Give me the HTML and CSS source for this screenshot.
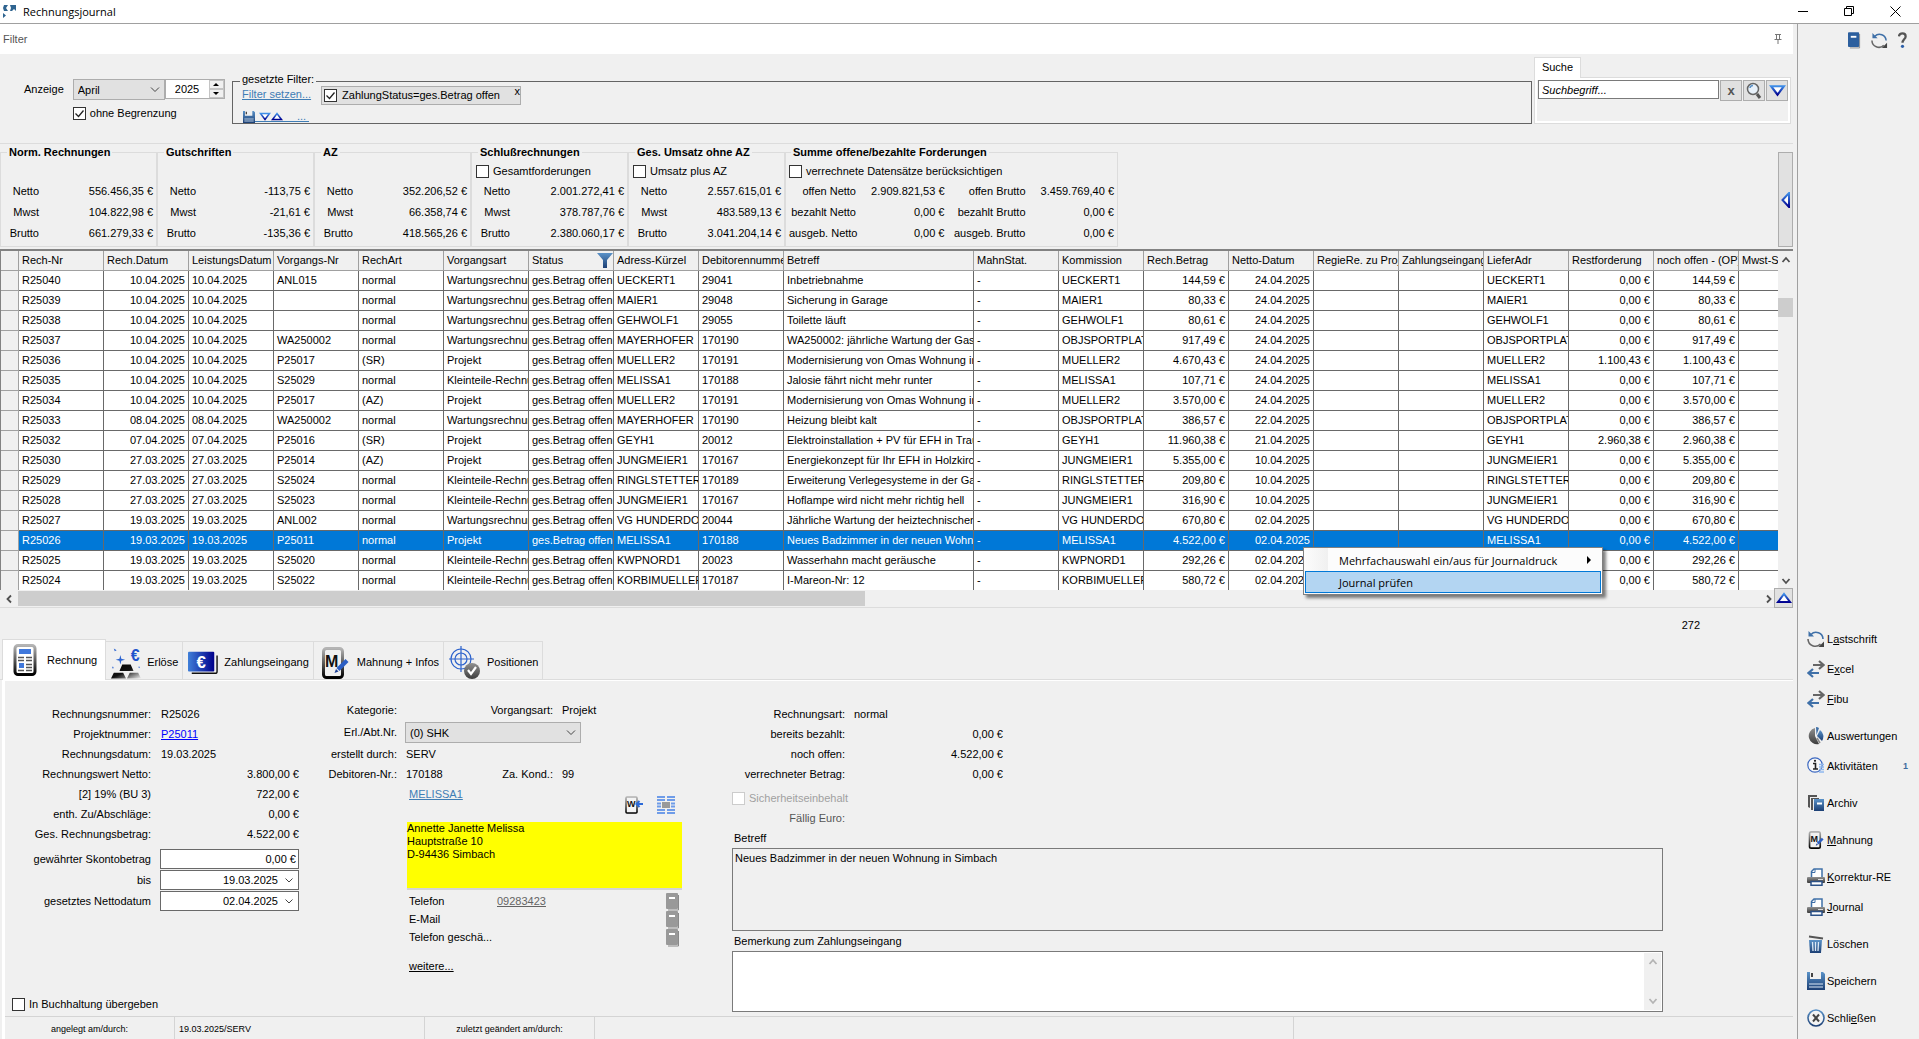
FILE: index.html
```html
<!DOCTYPE html>
<html lang="de">
<head>
    <meta charset="UTF-8">
    <meta name="viewport" content="width=device-width, initial-scale=1.0">
    <title>Rechnungsjournal</title>
    <link rel="stylesheet" href="styles.css">
</head>
<body>

    <!-- Symbole -->
    <svg class="symbols" width="0" height="0" aria-hidden="true">
        <defs>
            <linearGradient id="blau" x1="0" y1="0" x2="0" y2="1"><stop offset="0" stop-color="#5a92c8"/><stop offset="1" stop-color="#1c3f74"/></linearGradient>
            <linearGradient id="grau" x1="0" y1="0" x2="0" y2="1"><stop offset="0" stop-color="#909090"/><stop offset="1" stop-color="#3c3c3c"/></linearGradient>
            <linearGradient id="silber" x1="0" y1="0" x2="0" y2="1"><stop offset="0" stop-color="#b4b4b4"/><stop offset="1" stop-color="#000"/></linearGradient>
            <linearGradient id="barren" x1="0" y1="0" x2="1" y2="1"><stop offset="0" stop-color="#000"/><stop offset=".5" stop-color="#111"/><stop offset="1" stop-color="#eee"/></linearGradient>
            <linearGradient id="royal" x1="0" y1="0" x2="1" y2="0"><stop offset="0" stop-color="#3f7fd8"/><stop offset="1" stop-color="#00008c"/></linearGradient>
            <linearGradient id="royalv" x1="0" y1="0" x2="0" y2="1"><stop offset="0" stop-color="#3f8fe8"/><stop offset="1" stop-color="#000090"/></linearGradient>
        </defs>
        <symbol id="i-sync" viewBox="0 0 18 18">
            <path d="M4 4.500A7 7 0 0 1 16 9" fill="none" stroke="#3f70a8" stroke-width="1.600"/>
            <path d="M1.500 1v5.500H7z" fill="#3f70a8"/>
            <path d="M1 9a7.300 7.300 0 0 0 12.500 5" fill="none" stroke="#666" stroke-width="1.600"/>
            <path d="M17 11.500v5.500h-5.500z" fill="#444"/>
        </symbol>
        <symbol id="i-arrows" viewBox="0 0 18 18">
            <path d="M6 5h10M12 1l4.500 4-4.500 4" fill="none" stroke="#666" stroke-width="2.200"/>
            <path d="M12 13H2M6 9l-4.500 4 4.500 4" fill="none" stroke="#3f70a8" stroke-width="2.200"/>
        </symbol>
        <symbol id="i-printer" viewBox="0 0 18 18">
            <path d="M4.500 9V3.500L7 1h8v8" fill="#fff" stroke="#3f70a8" stroke-width="1.500"/>
            <path d="M8 1v3.500H4.500" fill="none" stroke="#3f70a8"/>
            <rect x="0" y="9" width="18" height="6" rx="1" fill="url(#grau)"/>
            <path d="M11 11.500h5" stroke="#ddd"/>
            <path d="M4 13.500v3.700h11v-3.700z" fill="#fff" stroke="#2c5288" stroke-width="1.500"/>
        </symbol>
        <symbol id="i-book" viewBox="0 0 14 18">
            <path d="M12.500 2v15H2" fill="none" stroke="#8a8a8a"/>
            <rect x="0" y="0" width="12" height="16" rx="1" fill="currentColor"/>
            <rect x="3" y="4" width="6" height="2" fill="#fff"/>
        </symbol>
        <symbol id="i-disk" viewBox="0 0 18 18">
            <path d="M0 0h3v7h11V0h2l2 2v16H0z" fill="url(#blau)"/>
            <path d="M4 1h2v4H4z" fill="#444"/>
            <path d="M2 12h14M2 15h14" stroke="#dbe8f5" stroke-width="1.200"/>
        </symbol>
        <symbol id="i-down" viewBox="0 0 16 12"><path d="M2 2h12L8 10z" fill="#fff" stroke="url(#royalv)" stroke-width="2"/></symbol>
        <symbol id="i-up" viewBox="0 0 16 12"><path d="M2 10h12L8 2z" fill="#fff" stroke="url(#royalv)" stroke-width="2"/></symbol>
        <symbol id="i-mahnung" viewBox="0 0 27 32">
            <rect x="2" y="1.500" width="19" height="29" rx="3" fill="#f0f0f0" stroke="url(#silber)" stroke-width="3"/>
            <text x="3.500" y="20" class="icon-letter" font-size="16" fill="#111">M</text>
            <path d="M24 12l3 3-9 9-3-3z" fill="#2c5fc4"/>
            <path d="M14.500 22l2.500 2.500-4 1.500z" fill="#1c3f94"/>
        </symbol>
        <symbol id="chev-up" viewBox="0 0 10 10"><path d="M1.500 7L5 3l3.500 4" fill="none" stroke="currentColor" stroke-width="1.800"/></symbol>
        <symbol id="chev-down" viewBox="0 0 10 10"><path d="M1.500 3L5 7l3.500-4" fill="none" stroke="currentColor" stroke-width="1.800"/></symbol>
        <symbol id="chev-left" viewBox="0 0 10 10"><path d="M7 1.500L3.500 5 7 8.500" fill="none" stroke="currentColor" stroke-width="1.800"/></symbol>
        <symbol id="chev-right" viewBox="0 0 10 10"><path d="M3 1.500L6.500 5 3 8.500" fill="none" stroke="currentColor" stroke-width="1.800"/></symbol>
    </svg>

    <div class="window">
        <!-- TITELLEISTE -->
        <header class="titlebar">
            <svg class="app-icon" width="14" height="14" viewBox="0 0 14 14" aria-hidden="true">
                <path d="M1 0h4L3 3l2 3H1L0 3zM7 0h6v6l-2-2-2 2H7l1-3zM0 8l3 2.500L0 13z" fill="#2f6490"/>
            </svg>
            <h1>Rechnungsjournal</h1>
            <div class="window-buttons">
                <button type="button" aria-label="Minimieren"><svg width="11" height="11" viewBox="0 0 11 11"><path d="M0 5.500h10" stroke="#000"/></svg></button>
                <button type="button" aria-label="Wiederherstellen"><svg width="11" height="11" viewBox="0 0 11 11"><path d="M.5 2.500h7v7h-7zM2.500 2.500v-2h7v7h-2" fill="none" stroke="#000"/></svg></button>
                <button type="button" aria-label="Fenster schließen"><svg width="11" height="11" viewBox="0 0 11 11"><path d="M.5.5l10 10M10.500.5l-10 10" stroke="#000"/></svg></button>
            </div>
        </header>

        <div class="workspace">
            <main class="main">
                <div class="filter-title">
                    <span>Filter</span>
                    <svg width="8" height="11" viewBox="0 0 8 11" aria-hidden="true"><path d="M1 .5h6M2.500 1v4.500M5.500 1v4.500M.5 5.500h7M4 6v4" fill="none" stroke="#777"/></svg>
                </div>

                <!-- FILTER -->
                <section class="filter">
                    <div class="display">
                        <label for="monat">Anzeige</label>
                        <div class="display-controls">
                            <div class="display-row">
                                <select id="monat"><option>April</option></select>
                                <div class="spinner">
                                    <input type="text" value="2025" aria-label="Jahr">
                                    <div class="spinner-buttons">
                                        <button type="button" aria-label="Jahr vor"><svg width="6" height="3" viewBox="0 0 6 3"><path d="M0 3h6L3 0z"/></svg></button>
                                        <button type="button" aria-label="Jahr zurück"><svg width="6" height="3" viewBox="0 0 6 3"><path d="M0 0h6L3 3z"/></svg></button>
                                    </div>
                                </div>
                            </div>
                            <label class="check"><input type="checkbox" checked>ohne Begrenzung</label>
                        </div>
                    </div>

                    <fieldset class="active-filters">
                        <legend>gesetzte Filter:</legend>
                        <div class="filter-line">
                            <a class="link" href="#">Filter setzen...</a>
                            <div class="chip">
                                <label class="check"><input type="checkbox" checked>ZahlungStatus=ges.Betrag offen</label>
                                <button type="button" aria-label="Filter entfernen">x</button>
                            </div>
                        </div>
                        <div class="filter-tools">
                            <svg width="12" height="12" aria-hidden="true"><use href="#i-disk"/></svg>
                            <a class="link" href="#">
                                <svg width="12" height="9" aria-hidden="true"><use href="#i-down"/></svg><svg width="12" height="9" aria-hidden="true"><use href="#i-up"/></svg>
                                <span>...</span>
                            </a>
                        </div>
                    </fieldset>

                    <div class="search">
                        <div class="search-tab">Suche</div>
                        <div class="search-panel">
                            <input type="text" placeholder="Suchbegriff..." aria-label="Suche">
                            <button type="button" class="search-clear" aria-label="Suche leeren">x</button>
                            <button type="button" aria-label="Suchen"><svg width="16" height="18" viewBox="0 0 16 18"><circle cx="7" cy="7" r="5.500" fill="#e8f1fa" stroke="#666" stroke-width="1.500"/><path d="M4 6a3 3 0 0 1 3-2.500" fill="none" stroke="#5a92c8" stroke-width="1.500"/><path d="M11 12l3 4" stroke="#555" stroke-width="3"/></svg></button>
                            <button type="button" aria-label="Mehr"><svg width="17" height="13"><use href="#i-down"/></svg></button>
                        </div>
                    </div>
                </section>

                <!-- SUMMEN -->
                <section class="totals">
                    <fieldset class="total">
                        <legend>Norm. Rechnungen</legend>
                        <dl>
                            <dt>Netto</dt><dd>556.456,35 €</dd>
                            <dt>Mwst</dt><dd>104.822,98 €</dd>
                            <dt>Brutto</dt><dd>661.279,33 €</dd>
                        </dl>
                    </fieldset>
                    <fieldset class="total">
                        <legend>Gutschriften</legend>
                        <dl>
                            <dt>Netto</dt><dd>-113,75 €</dd>
                            <dt>Mwst</dt><dd>-21,61 €</dd>
                            <dt>Brutto</dt><dd>-135,36 €</dd>
                        </dl>
                    </fieldset>
                    <fieldset class="total">
                        <legend>AZ</legend>
                        <dl>
                            <dt>Netto</dt><dd>352.206,52 €</dd>
                            <dt>Mwst</dt><dd>66.358,74 €</dd>
                            <dt>Brutto</dt><dd>418.565,26 €</dd>
                        </dl>
                    </fieldset>
                    <fieldset class="total">
                        <legend>Schlußrechnungen</legend>
                        <label class="check"><input type="checkbox">Gesamtforderungen</label>
                        <dl>
                            <dt>Netto</dt><dd>2.001.272,41 €</dd>
                            <dt>Mwst</dt><dd>378.787,76 €</dd>
                            <dt>Brutto</dt><dd>2.380.060,17 €</dd>
                        </dl>
                    </fieldset>
                    <fieldset class="total">
                        <legend>Ges. Umsatz ohne AZ</legend>
                        <label class="check"><input type="checkbox">Umsatz plus AZ</label>
                        <dl>
                            <dt>Netto</dt><dd>2.557.615,01 €</dd>
                            <dt>Mwst</dt><dd>483.589,13 €</dd>
                            <dt>Brutto</dt><dd>3.041.204,14 €</dd>
                        </dl>
                    </fieldset>
                    <fieldset class="total total-wide">
                        <legend>Summe offene/bezahlte Forderungen</legend>
                        <label class="check"><input type="checkbox">verrechnete Datensätze berücksichtigen</label>
                        <dl>
                            <dt>offen Netto</dt><dd>2.909.821,53 €</dd><dt>offen Brutto</dt><dd>3.459.769,40 €</dd>
                            <dt>bezahlt Netto</dt><dd>0,00 €</dd><dt>bezahlt Brutto</dt><dd>0,00 €</dd>
                            <dt>ausgeb. Netto</dt><dd>0,00 €</dd><dt>ausgeb. Brutto</dt><dd>0,00 €</dd>
                        </dl>
                    </fieldset>
                    <button type="button" class="totals-toggle" aria-label="Summen einklappen"><svg width="9" height="16" viewBox="0 0 9 16"><path d="M8 1v14L1.500 8z" fill="#fff" stroke="url(#royalv)" stroke-width="2"/></svg></button>
                </section>

                <!-- JOURNAL -->
                <section class="journal">
                    <div class="grid">
                        <div class="grid-view">
                            <table>
                                <colgroup>
                                    <col class="col-head"><col span="9" class="col"><col class="col-betreff"><col span="10" class="col">
                                </colgroup>
                                <thead>
                                    <tr><th></th><th>Rech-Nr</th><th>Rech.Datum</th><th>LeistungsDatum</th><th>Vorgangs-Nr</th><th>RechArt</th><th>Vorgangsart</th><th><span class="th-filter">Status<svg width="16" height="15" viewBox="0 0 16 15" aria-hidden="true"><path d="M0 0h16L10 7v8H6V7z" fill="url(#blau)"/></svg></span></th><th>Adress-Kürzel</th><th>Debitorennummer</th><th>Betreff</th><th>MahnStat.</th><th>Kommission</th><th>Rech.Betrag</th><th>Netto-Datum</th><th>RegieRe. zu Projekt</th><th>Zahlungseingang</th><th>LieferAdr</th><th>Restforderung</th><th>noch offen - (OP)</th><th>Mwst-Satz</th></tr>
                                </thead>
                                <tbody>
                                    <tr><td></td><td>R25040</td><td class="num">10.04.2025</td><td>10.04.2025</td><td>ANL015</td><td>normal</td><td>Wartungsrechnung</td><td>ges.Betrag offen</td><td>UECKERT1</td><td>29041</td><td>Inbetriebnahme</td><td>-</td><td>UECKERT1</td><td class="num">144,59 €</td><td class="num">24.04.2025</td><td></td><td></td><td>UECKERT1</td><td class="num">0,00 €</td><td class="num">144,59 €</td><td></td></tr>
                                    <tr><td></td><td>R25039</td><td class="num">10.04.2025</td><td>10.04.2025</td><td></td><td>normal</td><td>Wartungsrechnung</td><td>ges.Betrag offen</td><td>MAIER1</td><td>29048</td><td>Sicherung in Garage</td><td>-</td><td>MAIER1</td><td class="num">80,33 €</td><td class="num">24.04.2025</td><td></td><td></td><td>MAIER1</td><td class="num">0,00 €</td><td class="num">80,33 €</td><td></td></tr>
                                    <tr><td></td><td>R25038</td><td class="num">10.04.2025</td><td>10.04.2025</td><td></td><td>normal</td><td>Wartungsrechnung</td><td>ges.Betrag offen</td><td>GEHWOLF1</td><td>29055</td><td>Toilette läuft</td><td>-</td><td>GEHWOLF1</td><td class="num">80,61 €</td><td class="num">24.04.2025</td><td></td><td></td><td>GEHWOLF1</td><td class="num">0,00 €</td><td class="num">80,61 €</td><td></td></tr>
                                    <tr><td></td><td>R25037</td><td class="num">10.04.2025</td><td>10.04.2025</td><td>WA250002</td><td>normal</td><td>Wartungsrechnung</td><td>ges.Betrag offen</td><td>MAYERHOFER</td><td>170190</td><td>WA250002: jährliche Wartung der Gasheizung</td><td>-</td><td>OBJSPORTPLATZ</td><td class="num">917,49 €</td><td class="num">24.04.2025</td><td></td><td></td><td>OBJSPORTPLATZ</td><td class="num">0,00 €</td><td class="num">917,49 €</td><td></td></tr>
                                    <tr><td></td><td>R25036</td><td class="num">10.04.2025</td><td>10.04.2025</td><td>P25017</td><td>(SR)</td><td>Projekt</td><td>ges.Betrag offen</td><td>MUELLER2</td><td>170191</td><td>Modernisierung von Omas Wohnung in</td><td>-</td><td>MUELLER2</td><td class="num">4.670,43 €</td><td class="num">24.04.2025</td><td></td><td></td><td>MUELLER2</td><td class="num">1.100,43 €</td><td class="num">1.100,43 €</td><td></td></tr>
                                    <tr><td></td><td>R25035</td><td class="num">10.04.2025</td><td>10.04.2025</td><td>S25029</td><td>normal</td><td>Kleinteile-Rechnung</td><td>ges.Betrag offen</td><td>MELISSA1</td><td>170188</td><td>Jalosie fährt nicht mehr runter</td><td>-</td><td>MELISSA1</td><td class="num">107,71 €</td><td class="num">24.04.2025</td><td></td><td></td><td>MELISSA1</td><td class="num">0,00 €</td><td class="num">107,71 €</td><td></td></tr>
                                    <tr><td></td><td>R25034</td><td class="num">10.04.2025</td><td>10.04.2025</td><td>P25017</td><td>(AZ)</td><td>Projekt</td><td>ges.Betrag offen</td><td>MUELLER2</td><td>170191</td><td>Modernisierung von Omas Wohnung in</td><td>-</td><td>MUELLER2</td><td class="num">3.570,00 €</td><td class="num">24.04.2025</td><td></td><td></td><td>MUELLER2</td><td class="num">0,00 €</td><td class="num">3.570,00 €</td><td></td></tr>
                                    <tr><td></td><td>R25033</td><td class="num">08.04.2025</td><td>08.04.2025</td><td>WA250002</td><td>normal</td><td>Wartungsrechnung</td><td>ges.Betrag offen</td><td>MAYERHOFER</td><td>170190</td><td>Heizung bleibt kalt</td><td>-</td><td>OBJSPORTPLATZ</td><td class="num">386,57 €</td><td class="num">22.04.2025</td><td></td><td></td><td>OBJSPORTPLATZ</td><td class="num">0,00 €</td><td class="num">386,57 €</td><td></td></tr>
                                    <tr><td></td><td>R25032</td><td class="num">07.04.2025</td><td>07.04.2025</td><td>P25016</td><td>(SR)</td><td>Projekt</td><td>ges.Betrag offen</td><td>GEYH1</td><td>20012</td><td>Elektroinstallation + PV für EFH in Traunstein</td><td>-</td><td>GEYH1</td><td class="num">11.960,38 €</td><td class="num">21.04.2025</td><td></td><td></td><td>GEYH1</td><td class="num">2.960,38 €</td><td class="num">2.960,38 €</td><td></td></tr>
                                    <tr><td></td><td>R25030</td><td class="num">27.03.2025</td><td>27.03.2025</td><td>P25014</td><td>(AZ)</td><td>Projekt</td><td>ges.Betrag offen</td><td>JUNGMEIER1</td><td>170167</td><td>Energiekonzept für Ihr EFH in Holzkirchen</td><td>-</td><td>JUNGMEIER1</td><td class="num">5.355,00 €</td><td class="num">10.04.2025</td><td></td><td></td><td>JUNGMEIER1</td><td class="num">0,00 €</td><td class="num">5.355,00 €</td><td></td></tr>
                                    <tr><td></td><td>R25029</td><td class="num">27.03.2025</td><td>27.03.2025</td><td>S25024</td><td>normal</td><td>Kleinteile-Rechnung</td><td>ges.Betrag offen</td><td>RINGLSTETTER</td><td>170189</td><td>Erweiterung Verlegesysteme in der Garage</td><td>-</td><td>RINGLSTETTER</td><td class="num">209,80 €</td><td class="num">10.04.2025</td><td></td><td></td><td>RINGLSTETTER</td><td class="num">0,00 €</td><td class="num">209,80 €</td><td></td></tr>
                                    <tr><td></td><td>R25028</td><td class="num">27.03.2025</td><td>27.03.2025</td><td>S25023</td><td>normal</td><td>Kleinteile-Rechnung</td><td>ges.Betrag offen</td><td>JUNGMEIER1</td><td>170167</td><td>Hoflampe wird nicht mehr richtig hell</td><td>-</td><td>JUNGMEIER1</td><td class="num">316,90 €</td><td class="num">10.04.2025</td><td></td><td></td><td>JUNGMEIER1</td><td class="num">0,00 €</td><td class="num">316,90 €</td><td></td></tr>
                                    <tr><td></td><td>R25027</td><td class="num">19.03.2025</td><td>19.03.2025</td><td>ANL002</td><td>normal</td><td>Wartungsrechnung</td><td>ges.Betrag offen</td><td>VG HUNDERDORF</td><td>20044</td><td>Jährliche Wartung der heiztechnischen</td><td>-</td><td>VG HUNDERDORF</td><td class="num">670,80 €</td><td class="num">02.04.2025</td><td></td><td></td><td>VG HUNDERDORF</td><td class="num">0,00 €</td><td class="num">670,80 €</td><td></td></tr>
                                    <tr class="selected"><td></td><td>R25026</td><td class="num">19.03.2025</td><td>19.03.2025</td><td>P25011</td><td>normal</td><td>Projekt</td><td>ges.Betrag offen</td><td>MELISSA1</td><td>170188</td><td>Neues Badzimmer in der neuen Wohnung</td><td>-</td><td>MELISSA1</td><td class="num">4.522,00 €</td><td class="num">02.04.2025</td><td></td><td></td><td>MELISSA1</td><td class="num">0,00 €</td><td class="num">4.522,00 €</td><td></td></tr>
                                    <tr><td></td><td>R25025</td><td class="num">19.03.2025</td><td>19.03.2025</td><td>S25020</td><td>normal</td><td>Kleinteile-Rechnung</td><td>ges.Betrag offen</td><td>KWPNORD1</td><td>20023</td><td>Wasserhahn macht geräusche</td><td>-</td><td>KWPNORD1</td><td class="num">292,26 €</td><td class="num">02.04.2025</td><td></td><td></td><td>KWPNORD1</td><td class="num">0,00 €</td><td class="num">292,26 €</td><td></td></tr>
                                    <tr><td></td><td>R25024</td><td class="num">19.03.2025</td><td>19.03.2025</td><td>S25022</td><td>normal</td><td>Kleinteile-Rechnung</td><td>ges.Betrag offen</td><td>KORBIMUELLER</td><td>170187</td><td>I-Mareon-Nr: 12</td><td>-</td><td>KORBIMUELLER</td><td class="num">580,72 €</td><td class="num">02.04.2025</td><td></td><td></td><td>KORBIMUELLER</td><td class="num">0,00 €</td><td class="num">580,72 €</td><td></td></tr>
                                </tbody>
                            </table>
                        </div>
                        <div class="scroll-v">
                            <svg width="10" height="10" aria-hidden="true"><use href="#chev-up"/></svg>
                            <div class="scroll-track"><div class="thumb"></div></div>
                            <svg width="10" height="10" aria-hidden="true"><use href="#chev-down"/></svg>
                        </div>
                    </div>
                    <div class="scroll-h">
                        <svg width="10" height="10" aria-hidden="true"><use href="#chev-left"/></svg>
                        <div class="scroll-track"><div class="thumb"></div></div>
                        <svg width="10" height="10" aria-hidden="true"><use href="#chev-right"/></svg>
                        <button type="button" aria-label="Liste verkleinern"><svg width="16" height="12"><use href="#i-up"/></svg></button>
                    </div>

                    <div class="context-menu" role="menu">
                        <button type="button" role="menuitem">Mehrfachauswahl ein/aus für Journaldruck<svg width="4" height="8" viewBox="0 0 4 8" aria-hidden="true"><path d="M0 0l4 4-4 4z"/></svg></button>
                        <button type="button" role="menuitem" class="active">Journal prüfen</button>
                    </div>
                </section>

                <div class="count">272</div>

                <!-- REITER -->
                <nav class="tabs">
                    <button type="button" class="tab active">
                        <svg width="24" height="32" viewBox="0 0 24 32" aria-hidden="true">
                            <rect x="2" y="1.500" width="20" height="29" rx="3" fill="#fff" stroke="url(#silber)" stroke-width="3"/>
                            <rect x="6" y="5" width="12" height="5" fill="#3f78dc"/>
                            <path d="M5 13.500h6M13 13.500h6M5 16.500h6M13 16.500h6M13 20.500h6M13 23.500h6M5 26.500h6M13 26.500h6" stroke="#555" stroke-width="1.300"/>
                            <rect x="6" y="19" width="5" height="5" fill="#3f78dc"/>
                        </svg>
                        Rechnung
                    </button>
                    <button type="button" class="tab">
                        <svg width="30" height="32" viewBox="0 0 32 33" aria-hidden="true">
                            <path d="M0 33l3-6h10l3 6zM17 33l3-6h9l3 6zM9 25l3-7h9l3 7z" fill="url(#barren)"/>
                            <path d="M10 8l1 4 4 1-4 1-1 4-1-4-4-1 4-1zM3 1l3 2-2 1zM1 22l1-2 1 2zM29 21l1-1 1 2z" fill="#2c64d0"/>
                            <text x="21" y="14" class="icon-letter" font-size="17" fill="#1f55cc">€</text>
                        </svg>
                        Erlöse
                    </button>
                    <button type="button" class="tab">
                        <svg width="30" height="26" viewBox="0 0 32 26" aria-hidden="true">
                            <path d="M4 24h25a2 2 0 0 0 2-2V5" fill="none" stroke="#111" stroke-width="1.500"/>
                            <rect x="0" y="1" width="28" height="21" rx="1" fill="url(#royal)"/>
                            <text x="9" y="18" class="icon-letter" font-size="18" fill="#fff">€</text>
                        </svg>
                        Zahlungseingang
                    </button>
                    <button type="button" class="tab">
                        <svg width="32" height="32" aria-hidden="true"><use href="#i-mahnung"/></svg>
                        Mahnung + Infos
                    </button>
                    <button type="button" class="tab">
                        <svg width="32" height="33" viewBox="0 0 32 33" aria-hidden="true">
                            <g fill="none" stroke="#2c62cc" stroke-width="1.200"><circle cx="12" cy="13" r="10"/><circle cx="12" cy="13" r="6"/><path d="M12 0v26M0 13h25"/></g>
                            <circle cx="23" cy="25" r="8" fill="url(#grau)"/>
                            <path d="M19 24l3 4 5-7" fill="none" stroke="#fff" stroke-width="2.200"/>
                        </svg>
                        Positionen
                    </button>
                </nav>

                <!-- DETAILS -->
                <section class="detail">
                    <div class="detail-columns">
                        <div class="invoice">
                            <dl class="fields">
                                <dt>Rechnungsnummer:</dt><dd>R25026</dd>
                                <dt>Projektnummer:</dt><dd><a class="project" href="#">P25011</a></dd>
                                <dt>Rechnungsdatum:</dt><dd>19.03.2025</dd>
                                <dt>Rechnungswert Netto:</dt><dd class="num">3.800,00 €</dd>
                                <dt>[2] 19% (BU 3)</dt><dd class="num">722,00 €</dd>
                                <dt>enth. Zu/Abschläge:</dt><dd class="num">0,00 €</dd>
                                <dt>Ges. Rechnungsbetrag:</dt><dd class="num">4.522,00 €</dd>
                            </dl>
                            <div class="inputs">
                                <label for="skonto">gewährter Skontobetrag</label><input type="text" id="skonto" value="0,00 €">
                                <label for="bis">bis</label><input type="text" id="bis" class="date" value="19.03.2025">
                                <label for="netto">gesetztes Nettodatum</label><input type="text" id="netto" class="date" value="02.04.2025">
                            </div>
                            <label class="check booked"><input type="checkbox">In Buchhaltung übergeben</label>
                        </div>

                        <div class="customer">
                            <div class="customer-fields">
                                <span class="name">Kategorie:</span><span></span><span class="name">Vorgangsart:</span><span>Projekt</span>
                                <label class="name" for="abteilung">Erl./Abt.Nr.</label><select id="abteilung"><option>(0) SHK</option></select>
                                <span class="name">erstellt durch:</span><span>SERV</span><span></span><span></span>
                                <span class="name">Debitoren-Nr.:</span><span>170188</span><span class="name">Za. Kond.:</span><span>99</span>
                            </div>
                            <div class="address">
                                <div class="address-head">
                                    <a class="link" href="#">MELISSA1</a>
                                    <button type="button" aria-label="In Word öffnen"><svg width="18" height="18" viewBox="0 0 18 18"><rect x="1" y="1" width="11" height="16" rx="1" fill="#f4f4f4" stroke="url(#silber)" stroke-width="1.600"/><text x="2" y="11" class="icon-letter" font-size="9" fill="#111">W</text><path d="M18 8h-6M14.500 5l-3 3 3 3" fill="none" stroke="#2c6ad8" stroke-width="2"/></svg></button>
                                    <button type="button" aria-label="Verknüpfungen"><svg width="18" height="18" viewBox="0 0 18 18"><path d="M0 1h8M10 1h8M0 4h8M10 4h8M0 7.500h4M14 7.500h4M0 10.500h4M14 10.500h4M0 14h8M10 14h8M0 17h8M10 17h8" stroke="#6f9ce8" stroke-width="2"/><rect x="5" y="6" width="8" height="6" fill="#999"/></svg></button>
                                </div>
                                <address>Annette Janette Melissa<br>Hauptstraße 10<br>D-94436 Simbach</address>
                                <div class="contacts">
                                    <span>Telefon</span><a href="#">09283423</a><svg width="14" height="18" aria-hidden="true"><use href="#i-book"/></svg>
                                    <span>E-Mail</span><span></span><svg width="14" height="18" aria-hidden="true"><use href="#i-book"/></svg>
                                    <span>Telefon geschä...</span><span></span><svg width="14" height="18" aria-hidden="true"><use href="#i-book"/></svg>
                                </div>
                                <a class="more" href="#">weitere...</a>
                            </div>
                        </div>

                        <div class="payment">
                            <dl class="fields">
                                <dt>Rechnungsart:</dt><dd>normal</dd>
                                <dt>bereits bezahlt:</dt><dd class="num">0,00 €</dd>
                                <dt>noch offen:</dt><dd class="num">4.522,00 €</dd>
                                <dt>verrechneter Betrag:</dt><dd class="num">0,00 €</dd>
                            </dl>
                            <label class="check retention"><input type="checkbox" disabled>Sicherheitseinbehalt</label>
                            <div class="due">Fällig Euro:</div>
                            <label class="area-label" for="betreff">Betreff</label>
                            <textarea id="betreff" class="subject" readonly>Neues Badzimmer in der neuen Wohnung in Simbach</textarea>
                            <label class="area-label" for="bemerkung">Bemerkung zum Zahlungseingang</label>
                            <div class="remark">
                                <textarea id="bemerkung"></textarea>
                                <div class="remark-scroll">
                                    <svg width="10" height="10" aria-hidden="true"><use href="#chev-up"/></svg>
                                    <svg width="10" height="10" aria-hidden="true"><use href="#chev-down"/></svg>
                                </div>
                            </div>
                        </div>
                    </div>

                    <footer class="status">
                        <span class="status-label">angelegt am/durch:</span>
                        <span class="status-created">19.03.2025/SERV</span>
                        <span class="status-changed">zuletzt geändert am/durch:</span>
                        <span class="status-user"></span>
                        <span class="status-rest"></span>
                    </footer>
                </section>
            </main>

            <!-- AKTIONEN -->
            <aside class="sidebar">
                <div class="side-top">
                    <button type="button" class="phonebook" aria-label="Telefonbuch"><svg width="13" height="17"><use href="#i-book"/></svg></button>
                    <button type="button" aria-label="Aktualisieren"><svg width="17" height="17"><use href="#i-sync"/></svg></button>
                    <button type="button" aria-label="Hilfe"><svg width="9" height="17" viewBox="0 0 10 18"><path d="M1 4.500C1.500 0 8.500 0 8.500 4.500c0 3-3.500 3.500-3.500 7" fill="none" stroke="#555" stroke-width="2.500"/><circle cx="5" cy="15.500" r="1.800" fill="#2c5fa8"/></svg></button>
                </div>
                <nav class="actions">
                    <button type="button"><svg width="18" height="18"><use href="#i-sync"/></svg><span>L<u>a</u>stschrift</span></button>
                    <button type="button"><svg width="18" height="18"><use href="#i-arrows"/></svg><span>E<u>x</u>cel</span></button>
                    <button type="button"><svg width="18" height="18"><use href="#i-arrows"/></svg><span><u>F</u>ibu</span></button>
                    <button type="button" class="group"><svg width="18" height="18" viewBox="0 0 18 18"><path d="M8 1a8 8 0 1 0 4 16L8 9z" fill="url(#grau)"/><path d="M9 0a8 8 0 0 1 3 1L9.500 8z" fill="#3f70a8"/><path d="M13 3a8 8 0 0 1 2 11l-5-5z" fill="url(#blau)"/><path d="M10 11l3 5" stroke="#888" stroke-width="1.500"/></svg><span>Auswertungen</span></button>
                    <button type="button"><svg width="18" height="18" viewBox="0 0 18 18"><circle cx="8" cy="8" r="7.200" fill="#f8f8f8" stroke="#3c68c0" stroke-width="1.200"/><path d="M6 6.500h2.500V12M6 12h5" fill="none" stroke="#222" stroke-width="1.600"/><circle cx="8" cy="3.800" r="1.100" fill="#222"/><path d="M12 7.500h5M12 10h5M12 12.500h5M12 15h5" stroke="#8fb8ee" stroke-width="1.400"/></svg><span>Aktivitäten</span><b>1</b></button>
                    <button type="button" class="group"><svg width="18" height="18" viewBox="0 0 18 18"><path d="M1 13V1h9v2H3v11zM4 16V4h8v1H6v11z" fill="#555"/><rect x="7" y="5" width="10" height="12" fill="url(#blau)"/><path d="M10 8.500h5v2h-5z" fill="#fff"/></svg><span>Archiv</span></button>
                    <button type="button" class="group"><svg width="18" height="18"><use href="#i-mahnung"/></svg><span><u>M</u>ahnung</span></button>
                    <button type="button" class="group"><svg width="18" height="18"><use href="#i-printer"/></svg><span><u>K</u>orrektur-RE</span></button>
                    <button type="button"><svg width="18" height="18"><use href="#i-printer"/></svg><span><u>J</u>ournal</span></button>
                    <button type="button" class="group"><svg width="18" height="18" viewBox="0 0 18 18"><path d="M2 1.500l14 2" stroke="#555" stroke-width="2"/><path d="M2 5h13l-1 13H3z" fill="url(#blau)"/><path d="M5.500 7l.5 9M8.500 7v9M11.500 7l-.5 9" stroke="#dbe8f5" stroke-width="1.300"/></svg><span>Löschen</span></button>
                    <button type="button" class="group"><svg width="18" height="18"><use href="#i-disk"/></svg><span>Speichern</span></button>
                    <button type="button" class="group"><svg width="18" height="18" viewBox="0 0 18 18"><circle cx="9" cy="9" r="8" fill="#f4f4f4" stroke="url(#blau)" stroke-width="1.600"/><path d="M6 5.500l6 7M12 5.500l-6 7" stroke="#444" stroke-width="2"/></svg><span>Schli<u>e</u>ßen</span></button>
                </nav>
            </aside>
        </div>
    </div>

</body>
</html>
```

FILE: styles.css
```css
* {
    box-sizing: border-box;
}

body {
    margin: 0;
    background-color: #f0f0f0;
    color: #000;
    font-family: "Liberation Sans", Arial, sans-serif;
    font-size: 11px;
    line-height: 13px;
}

h1, dl, dd, address {
    margin: 0;
    font-style: normal;
}

button, input, select, textarea {
    font: inherit;
    color: inherit;
    margin: 0;
    padding: 0;
}

button {
    display: flex;
    align-items: center;
    justify-content: center;
    border: none;
    background: none;
}

svg {
    flex: none;
    display: block;
}

.symbols {
    position: absolute;
}

.icon-letter {
    font-family: "Liberation Sans", Arial, sans-serif;
    font-weight: bold;
}

select {
    appearance: none;
    border: 1px solid #adadad;
    border-radius: 0;
    padding: 0 4px;
    background: #e1e1e1 url("data:image/svg+xml,%3Csvg xmlns='http://www.w3.org/2000/svg' width='10' height='6'%3E%3Cpath d='M1 .5l4 4 4-4' fill='none' stroke='%23444'/%3E%3C/svg%3E") no-repeat right 4px center;
}

/* Kontrollkästchen */
.check {
    display: flex;
    align-items: center;
    gap: 4px;
}

.check input {
    appearance: none;
    flex: none;
    width: 13px;
    height: 13px;
    border: 1px solid #333;
    background-color: #fff;
}

.check input:checked {
    background-image: url("data:image/svg+xml,%3Csvg xmlns='http://www.w3.org/2000/svg' width='11' height='11'%3E%3Cpath d='M1.500 5.500l3 3 5-6' fill='none' stroke='%23222' stroke-width='1.300'/%3E%3C/svg%3E");
}

.check input:disabled {
    border-color: #ccc;
}

.link {
    color: #3f7db5;
}

.num {
    text-align: right;
}

/* Fenster */
.window {
    display: flex;
    flex-direction: column;
    min-height: 100vh;
}

.titlebar {
    display: flex;
    align-items: center;
    height: 24px;
    padding: 0 18px 0 3px;
    background-color: #fff;
    border-bottom: 1px solid #a0a0a0;
}

.titlebar h1 {
    flex: 1;
    margin-left: 6px;
    font-family: "Open Sans", sans-serif;
    font-size: 11px;
    font-weight: normal;
}

.window-buttons {
    display: flex;
    gap: 35px;
}

.workspace {
    flex: 1;
    display: flex;
}

.main {
    flex: 1;
    min-width: 0;
    display: flex;
    flex-direction: column;
    padding-right: 4px;
    border-right: 1px solid #a0a0a0;
}

.filter-title {
    display: flex;
    align-items: center;
    justify-content: space-between;
    height: 30px;
    padding: 0 11px 0 3px;
    background-color: #fff;
    color: #555;
}

/* Filter */
.filter {
    display: flex;
    align-items: flex-start;
    height: 90px;
    padding-right: 2px;
    border-bottom: 1px solid #dcdcdc;
}

.display {
    display: flex;
    gap: 9px;
    width: 232px;
    padding: 25px 0 0 24px;
    line-height: 21px;
}

.display-row {
    display: flex;
    margin-bottom: 3px;
}

.display-row select {
    width: 92px;
    height: 21px;
}

.spinner {
    display: flex;
    width: 60px;
    height: 20px;
    border: 1px solid #adadad;
    background-color: #fff;
}

.spinner input {
    width: 100%;
    min-width: 0;
    border: none;
    padding-left: 9px;
    background: none;
}

.spinner-buttons {
    display: flex;
    flex-direction: column;
    width: 15px;
    flex: none;
}

.spinner-buttons button {
    flex: 1;
    border: 1px solid #c4c4c4;
    background-color: #f0f0f0;
}

.active-filters {
    flex: 1;
    min-width: 0;
    height: 48px;
    margin: 22px 0 0;
    padding: 0 9px;
    border: 1px solid #646464;
}

.active-filters legend {
    margin-left: -2px;
    padding: 0 2px 4px;
    line-height: 6px;
}

.filter-line {
    display: flex;
    gap: 10px;
    line-height: 17px;
}

.chip {
    display: flex;
    justify-content: space-between;
    width: 200px;
    height: 19px;
    padding-left: 2px;
    border: 1px solid #adadad;
    background-color: #e1e1e1;
}

.chip .check {
    gap: 5px;
}

.chip button {
    align-self: flex-start;
    line-height: 9px;
}

.filter-tools {
    display: flex;
    align-items: center;
    margin-top: 6px;
    padding-left: 1px;
}

.filter-tools .link {
    display: flex;
    align-items: flex-end;
    width: 54px;
    height: 10px;
    padding-left: 4px;
    border-bottom: 1px solid #3f7db5;
    text-decoration: none;
    line-height: 9px;
}

.filter-tools span {
    margin-left: 14px;
}

.search {
    width: 257px;
    margin: 3px 0 0 2px;
}

.search-tab {
    position: relative;
    width: 47px;
    height: 21px;
    margin-bottom: -1px;
    border: 1px solid #dcdcdc;
    border-bottom: none;
    background-color: #fff;
    line-height: 19px;
    text-align: center;
}

.search-panel {
    display: flex;
    align-items: flex-start;
    gap: 1px;
    height: 47px;
    padding: 1px 2px;
    border: 1px solid #dcdcdc;
    box-shadow: inset 0 0 0 2px #fff;
}

.search-panel input {
    flex: 1;
    min-width: 0;
    height: 19px;
    margin: 1px 0 0 1px;
    padding: 0 3px;
    border: 1px solid #7a7a7a;
    background-color: #fff;
    font-style: italic;
}

.search-panel input::placeholder {
    color: #000;
}

.search-panel button {
    width: 22px;
    height: 21px;
    margin-top: 1px;
    border: 1px solid #adadad;
    background-color: #e1e1e1;
}

.search-panel .search-clear {
    color: #555;
    font-size: 13px;
    font-weight: bold;
}

/* Summen */
.totals {
    display: flex;
    padding: 5px 0 2px;
}

.total {
    width: 157px;
    min-width: 0;
    height: 98px;
    margin: 0;
    padding: 7px 3px 0 4px;
    border: 1px solid #dcdcdc;
}

.total legend {
    margin-left: 2px;
    padding: 0 2px;
    font-weight: bold;
    line-height: 6px;
}

.total .check {
    height: 19px;
}

.total dl {
    display: grid;
    grid-template-columns: 34px 1fr;
    line-height: 21px;
    text-align: right;
    white-space: nowrap;
}

.total legend + dl {
    margin-top: 19px;
}

.total-wide {
    width: 333px;
    padding-left: 3px;
}

.total-wide dl {
    grid-template-columns: 67px 1fr 81px 1fr;
}

.totals-toggle {
    width: 15px;
    margin: 3px 0 0 auto;
    border: 1px solid #adadad;
    background-color: #e1e1e1;
}

/* Journal */
.journal {
    position: relative;
    border-top: 2px solid #828282;
    border-bottom: 1px solid #dcdcdc;
}

.grid {
    display: flex;
}

.grid-view {
    flex: 1;
    min-width: 0;
    overflow: hidden;
    border-left: 1px solid #828282;
}

table {
    width: 1823px;
    table-layout: fixed;
    border-collapse: separate;
    border-spacing: 0;
}

.col-head {
    width: 18px;
}

.col {
    width: 85px;
}

.col-betreff {
    width: 190px;
}

th, td {
    height: 20px;
    padding: 0 3px;
    overflow: hidden;
    border-right: 1px solid #696969;
    border-bottom: 1px solid #696969;
    white-space: nowrap;
}

th {
    font-weight: normal;
    text-align: left;
    border-color: #a0a0a0;
}

td {
    background-color: #fff;
}

td:first-child {
    background-color: #f0f0f0;
    border-color: #a0a0a0;
}

tbody tr:last-child td {
    height: 19px;
    border-bottom: none;
}

.selected td:not(:first-child) {
    background-color: #0078d7;
    color: #fff;
}

.th-filter {
    display: flex;
    align-items: center;
    justify-content: space-between;
    margin-right: -3px;
}

.scroll-v {
    display: flex;
    flex-direction: column;
    align-items: center;
    width: 15px;
    padding: 4px 0;
    color: #505050;
}

.scroll-v .scroll-track {
    flex: 1;
    width: 100%;
    padding-top: 33px;
}

.scroll-v .thumb {
    height: 19px;
    background-color: #cdcdcd;
}

.scroll-h {
    display: flex;
    align-items: center;
    height: 17px;
    padding-left: 4px;
    color: #505050;
}

.scroll-h .scroll-track {
    flex: 1;
    height: 15px;
    margin-left: 4px;
}

.scroll-h .thumb {
    width: 48.5%;
    height: 100%;
    background-color: #cdcdcd;
}

.scroll-h button {
    width: 19px;
    height: 20px;
    margin-top: -2px;
    border: 1px solid #adadad;
    background-color: #e1e1e1;
}

/* Kontextmenü */
.context-menu {
    position: absolute;
    left: 1303px;
    top: 296px;
    width: 300px;
    padding: 1px;
    border: 1px solid #808080;
    background: linear-gradient(to right, #fcfcfc, #f0f0f0 24px, #fcfcfc 24px);
    box-shadow: 3px 3px 3px rgba(0, 0, 0, 0.5);
    font-family: "Open Sans", sans-serif;
}

.context-menu button {
    justify-content: space-between;
    width: 100%;
    height: 22px;
    padding: 0 9px 0 33px;
    border: 1px solid transparent;
}

.context-menu .active {
    background-color: #b3d5f2;
    border-color: #0078d7;
}

.count {
    height: 31px;
    padding-right: 93px;
    text-align: right;
    line-height: 35px;
}

/* Reiter */
.tabs {
    display: flex;
    align-items: flex-end;
    padding-left: 2px;
    border-bottom: 1px solid #dcdcdc;
}

.tab {
    gap: 6px;
    height: 38px;
    padding: 4px 4px 0 5px;
    border: 1px solid #dcdcdc;
    border-left: none;
    border-bottom: none;
}

.tab.active {
    gap: 10px;
    height: 41px;
    margin-bottom: -1px;
    padding: 0 8px 0 10px;
    border-left: 1px solid #dcdcdc;
    background-color: #fff;
}

/* Details */
.detail {
    flex: 1;
    display: flex;
    flex-direction: column;
    margin-left: 2px;
    border-left: 3px solid #fff;
    border-top: 1px solid #fff;
}

.detail-columns {
    flex: 1;
    display: flex;
}

.fields {
    display: grid;
    line-height: 20px;
}

.fields dt {
    text-align: right;
}

.invoice {
    display: flex;
    flex-direction: column;
    width: 294px;
    padding-top: 23px;
}

.invoice .fields {
    grid-template-columns: 146px 138px;
    column-gap: 10px;
}

.project {
    color: #00f;
}

.inputs {
    display: grid;
    grid-template-columns: 146px 139px;
    column-gap: 9px;
    row-gap: 1px;
    margin-top: 5px;
    line-height: 20px;
    text-align: right;
}

.inputs input {
    min-width: 0;
    height: 20px;
    padding: 0 2px;
    border: 1px solid #696969;
    background-color: #fff;
    text-align: right;
}

.inputs .date {
    padding-right: 20px;
    background: #fff url("data:image/svg+xml,%3Csvg xmlns='http://www.w3.org/2000/svg' width='8' height='5'%3E%3Cpath d='M.5.5l3.500 3.500 3.500-3.500' fill='none' stroke='%23444'/%3E%3C/svg%3E") no-repeat right 5px center;
}

.booked {
    margin: auto 0 2px 7px;
}

.customer {
    width: 383px;
    padding-top: 19px;
}

.customer-fields {
    display: grid;
    grid-template-columns: 98px 72px 66px 1fr;
    column-gap: 9px;
    line-height: 20px;
}

.customer-fields .name {
    text-align: right;
    white-space: nowrap;
}

.customer-fields label {
    line-height: 24px;
}

.customer-fields select {
    grid-column: 2 / -1;
    width: 176px;
    height: 21px;
    margin: 2px 0 1px -1px;
}

.address {
    margin-left: 108px;
}

.address-head {
    display: flex;
    align-items: flex-end;
    gap: 14px;
    height: 38px;
    padding: 0 7px 8px 2px;
}

.address-head .link {
    align-self: flex-start;
    margin-right: auto;
    line-height: 20px;
}

address {
    height: 68px;
    background-color: #ff0;
    border-bottom: 2px solid #d4d4d4;
}

.contacts {
    display: grid;
    grid-template-columns: 88px 1fr 14px;
    padding: 3px 2px 0;
    line-height: 17px;
}

.contacts a {
    color: #646464;
}

.contacts svg {
    color: #999;
}

.more {
    display: inline-block;
    margin: 13px 0 0 2px;
    color: #000;
}

.payment {
    flex: 1;
    min-width: 0;
    margin: 0 130px 0 50px;
    padding-top: 23px;
}

.payment .fields {
    grid-template-columns: 113px 149px;
    column-gap: 9px;
}

.retention {
    height: 20px;
    margin-top: 4px;
    color: #a0a0a0;
}

.due {
    width: 113px;
    color: #555;
    line-height: 20px;
    text-align: right;
}

.area-label {
    display: block;
    padding-left: 2px;
    line-height: 20px;
}

textarea {
    display: block;
    width: 100%;
    resize: none;
    border: none;
    outline: none;
}

.subject {
    height: 83px;
    padding: 3px 2px;
    border: 1px solid #7a7a7a;
    background-color: #f0f0f0;
}

.remark {
    display: flex;
    height: 61px;
    padding: 1px;
    border: 1px solid #7a7a7a;
    background-color: #fff;
}

.remark-scroll {
    display: flex;
    flex-direction: column;
    justify-content: space-between;
    align-items: center;
    width: 17px;
    padding: 4px 0;
    background-color: #f0f0f0;
    color: #b4b4b4;
}

/* Statuszeile */
.status {
    display: flex;
    height: 23px;
    margin-top: 3px;
    border-top: 1px solid #d4d4d4;
    font-size: 9px;
    line-height: 24px;
}

.status span {
    border-right: 1px solid #d4d4d4;
}

.status-label {
    width: 170px;
    padding-right: 46px;
    text-align: right;
}

.status-created {
    width: 250px;
    padding-left: 4px;
}

.status-changed {
    width: 170px;
    text-align: center;
}

.status-user {
    flex: 7;
}

.status .status-rest {
    flex: 5;
    border: none;
}

/* Aktionen */
.sidebar {
    display: flex;
    flex-direction: column;
    justify-content: space-between;
    width: 121px;
    padding: 8px 8px 12px 9px;
}

.side-top {
    display: flex;
    justify-content: flex-end;
    gap: 10px;
    padding-right: 4px;
}

.phonebook {
    color: #2c5f9e;
}

.actions {
    display: flex;
    flex-direction: column;
    gap: 12px;
}

.actions button {
    justify-content: flex-start;
    gap: 2px;
    white-space: nowrap;
}

.actions .group {
    margin-top: 7px;
}

.actions b {
    margin: 0 3px 0 auto;
    color: #3f6c9e;
    font-size: 9px;
}
```
